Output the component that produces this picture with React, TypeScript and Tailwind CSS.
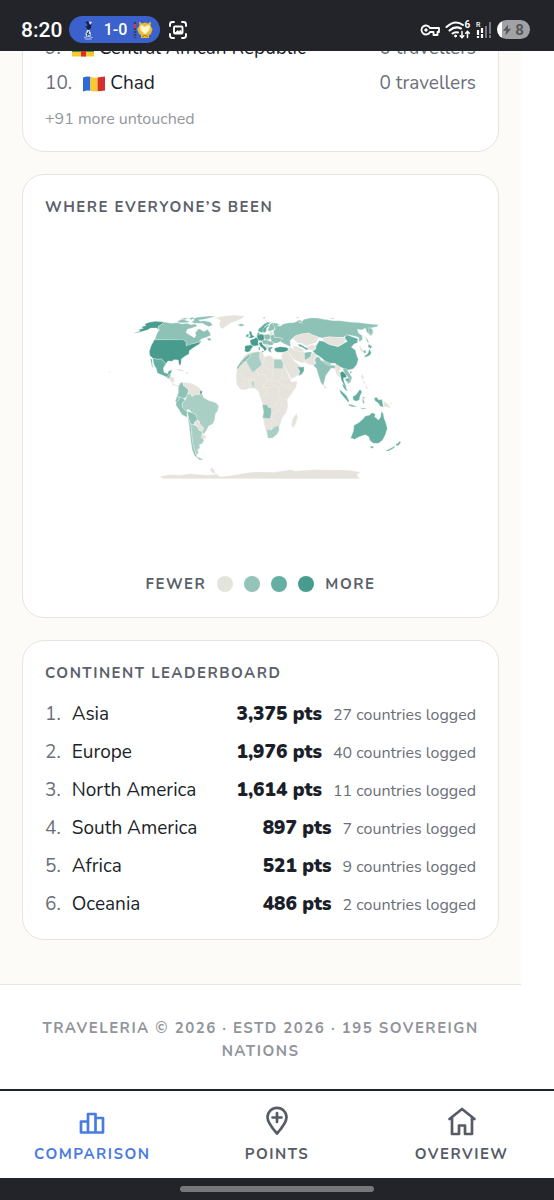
import React from "react";

const C = {
  none: "#e6e3dc",
  low: "#a9cfc4",
  mid: "#8fc2b7",
  high: "#64afa2",
  top: "#489c8e",
};

type Shape = [fill: string, d: string];

const WEST: Shape[] = [
  [C.top, "M100 100L112 96L120 93L116 89L130 85L124 80L138 77L134 72L148 67L166 64L193 66L184 74L174 80L177 90L170 84L152 84L142 90L128 94L112 98Z"],
  [C.mid, "M193 66L214 70L232 68L246 72L262 70L272 74L286 72L292 78L276 84L262 88L258 98L268 104L278 110L282 114L288 108L286 98L294 88L300 86L306 92L314 94L322 88L330 98L332 106L320 112L306 116L298 122L304 122L302 128L290 128L276 132L262 140L257 138L259 128L250 120L164 119L168 108L172 98L178 90L174 80L184 74Z"],
  [C.mid, "M232 64L246 58L262 62L270 66L254 68L238 68Z"],
  [C.mid, "M274 66L284 60L278 56L292 52L308 50L330 48L346 49L328 54L312 58L296 60L300 64L312 62L330 66L338 74L328 80L318 76L308 70L296 70L284 70Z"],
  [C.mid, "M240 58L252 54L264 54L256 59ZM266 56L276 52L284 54L274 59Z"],
  [C.mid, "M320 116L330 113L334 121L326 122Z"],
  [C.top, "M163 119L250 119L259 128L258 138L275 132L290 128L300 126L299 132L288 138L276 146L268 152L267 162L256 168L244 177L243 192L240 197L236 190L235 180L222 179L216 184L204 183L198 191L184 177L172 178L158 175L149 166L148 154L153 138Z"],
  [C.high, "M158 175L172 178L184 177L198 191L190 204L192 217L203 221L206 212L217 210L212 221L206 226L204 233L188 226L172 219L169 206L162 194Z"],
  [C.high, "M151 176L156 178L157 194L160 203L156 200Z"],
  [C.mid, "M204 226L213 222L211 232L206 236L200 234Z"],
  [C.none, "M211 230L222 232L223 246L216 248L208 238ZM216 248L226 254L238 257L244 260L230 259L217 254Z"],
  [C.none, "M227 207L242 208L254 214L244 214L232 210ZM257 217L267 217L265 221L257 221Z"],
  [C.none, "M348 53L372 48L402 46L434 48L424 56L408 64L392 69L374 82L368 87L360 80L358 70L362 62Z"],
  [C.mid, "M415 74L424 71L433 75L426 79L418 78Z"],
  [C.mid, "M240 250L248 246L250 256L258 262L266 270L264 282L258 292L250 296L238 291L231 289L235 278L235 262Z"],
  [C.none, "M250 247L262 248L274 250L290 258L302 268L306 282L284 285L276 290L270 280L262 284L266 270L258 262L250 256Z"],
  [C.top, "M301 270L307 275L304 284L300 280Z"],
  [C.mid, "M231 289L240 291L236 300L230 308L226 302Z"],
  [C.mid, "M228 308L236 300L240 291L250 296L256 300L246 310L248 322L260 330L262 342L260 352L246 344L236 328L228 316Z"],
  [C.low, "M262 284L270 280L276 290L284 285L306 282L312 294L328 302L348 308L356 318L353 332L346 342L344 360L338 372L326 378L320 390L312 402L302 394L310 384L300 374L298 364L290 360L288 344L276 338L266 328L256 332L248 322L246 310L256 300Z"],
  [C.mid, "M262 334L276 338L288 344L292 360L284 366L282 374L272 372L266 358Z"],
  [C.none, "M284 366L294 360L300 372L312 384L308 394L298 392L292 378L284 374Z"],
  [C.none, "M304 400L312 404L320 412L312 418L304 414Z"],
  [C.mid, "M262 342L268 364L272 372L275 392L276 412L280 436L286 456L292 474L284 468L277 450L273 426L270 396L266 366Z"],
  [C.low, "M272 372L282 374L292 380L298 392L308 395L304 412L312 420L308 430L298 434L300 444L292 450L296 458L290 464L293 474L286 456L280 436L276 412L275 392Z"],
  [C.mid, "M288 470L300 474L311 480L298 479Z"],
  [C.none, "M27 214L32 215L30 218Z"],
];

const EAST: Shape[] = [
  [C.mid, "M25 74L34 71L43 75L36 79L28 78Z"],
  [C.top, "M58 92L65 96L66 104L74 110L66 114L55 114L62 108L58 102Z"],
  [C.high, "M48 104L56 101L56 110L48 112Z"],
  [C.top, "M45 137L62 135L70 138L64 146L60 154L52 157L44 154Z"],
  [C.top, "M60 120L72 116L78 112L86 118L84 128L86 136L76 138L68 137L62 133Z"],
  [C.top, "M80 106L90 102L102 104L103 118L96 124L86 120L82 114Z"],
  [C.top, "M86 128L96 126L98 134L108 142L112 146L104 154L100 146L90 138ZM94 152L102 154L98 158ZM86 142L90 142L90 150L86 150Z"],
  [C.mid, "M102 104L116 102L122 108L120 118L110 120L103 116Z"],
  [C.mid, "M96 120L110 120L122 124L132 128L128 136L118 136L106 136L98 130Z"],
  [C.none, "M104 132L116 134L120 142L116 150L110 146Z"],
  [C.high, "M114 143L126 140L128 144L122 148L124 158L116 154Z"],
  [C.high, "M84 94L86 86L94 80L102 72L114 66L122 68L112 74L104 80L104 90L96 98L90 96Z"],
  [C.top, "M82 100L88 97L88 105L82 105Z"],
  [C.high, "M100 98L98 88L106 80L114 74L118 76L110 84L108 96Z"],
  [C.mid, "M112 92L116 84L120 72L128 68L134 78L134 88L122 93Z"],
  [C.none, "M116 96L126 94L130 104L122 106Z"],
  [C.mid, "M120 106L132 104L134 112L148 112L158 116L154 124L144 128L134 130L124 124Z"],
  [C.mid, "M128 68L140 70L150 74L140 78L152 78L160 72L178 68L190 68L206 62L210 70L216 64L222 58L240 54L262 54L282 58L310 62L330 62L360 66L390 68L420 72L446 74L440 80L422 84L430 96L424 108L410 96L406 84L396 90L382 88L386 100L396 106L398 118L388 126L386 112L372 108L352 104L340 112L316 112L296 110L276 114L262 110L246 104L236 100L216 102L196 108L188 114L180 122L182 140L172 136L160 130L150 124L158 116L148 112L134 112L132 104L130 94L136 86Z"],
  [C.mid, "M200 62L212 60L218 70L208 66ZM96 53L106 52L104 56ZM196 53L206 51L208 54ZM296 55L310 54L314 57Z"],
  [C.mid, "M404 108L412 118L418 128L412 126ZM416 82L428 88L426 104L416 98Z"],
  [C.top, "M134 144L150 140L168 142L176 146L172 154L158 157L142 157L134 152Z"],
  [C.none, "M188 116L198 106L218 101L236 99L250 106L266 112L262 120L256 128L242 132L230 138L214 130L202 128L196 122Z"],
  [C.high, "M204 132L214 134L226 142L238 146L230 150L216 142L206 138Z"],
  [C.none, "M188 138L202 140L222 150L220 156L206 154L192 150Z"],
  [C.none, "M232 140L248 134L262 138L256 146L248 152L236 148Z"],
  [C.none, "M180 140L192 150L206 154L222 156L224 176L226 188L214 188L200 182L188 176L180 162L172 154Z"],
  [C.mid, "M223 158L234 156L246 156L242 170L232 182L224 180Z"],
  [C.none, "M226 188L226 180L242 170L246 158L258 158L260 168L252 180L258 190L250 196L240 194Z"],
  [C.none, "M158 158L174 154L180 164L190 180L204 192L218 202L214 220L196 230L184 238L178 226L168 208L158 188L154 170Z"],
  [C.high, "M202 200L212 202L222 200L222 212L216 222L206 228L210 214Z"],
  [C.mid, "M250 196L258 190L254 180L260 170L268 172L274 182L290 190L304 196L316 196L318 206L304 204L298 212L288 226L284 240L280 258L272 246L264 222L260 206Z"],
  [C.low, "M274 180L290 184L304 192L300 197L286 192Z"],
  [C.none, "M283 256L289 260L287 267L283 264Z"],
  [C.high, "M248 154L258 146L258 138L268 122L280 124L300 134L324 140L342 130L352 124L344 114L350 104L366 110L384 116L382 128L372 132L364 142L376 150L380 166L385 178L380 194L370 206L356 210L344 208L334 202L322 200L316 190L300 190L284 182L272 172L260 164Z"],
  [C.none, "M276 116L296 111L318 112L342 114L348 120L340 130L324 139L300 134L284 126Z"],
  [C.none, "M314 196L322 194L334 204L328 214L334 228L328 232L318 220Z"],
  [C.top, "M330 218L338 214L348 222L350 232L340 234L342 246L350 262L344 258L334 240Z"],
  [C.mid, "M338 206L350 206L354 214L366 232L362 246L354 252L350 242L356 234L344 220Z"],
  [C.high, "M346 236L358 234L358 242L350 246Z"],
  [C.high, "M336 250L346 258L352 272L348 272L340 262ZM328 268L338 276L350 288L358 304L354 306L342 292L332 280Z"],
  [C.high, "M368 290L378 284L390 268L396 276L390 288L388 300L378 304L370 300Z"],
  [C.high, "M356 312L368 315L382 320L368 320L358 317Z"],
  [C.mid, "M398 292L408 290L400 296L404 308L400 312L397 302Z"],
  [C.mid, "M390 323L402 324L412 326L398 328Z"],
  [C.high, "M432 294L440 292L446 300L456 298L460 322L450 318L444 308L436 304Z"],
  [C.none, "M460 302L474 312L482 324L472 322L462 320ZM478 306L488 312L484 314ZM394 222L402 230L398 240L394 234ZM404 256L414 262L410 268ZM398 242L406 246L402 252Z"],
  [C.none, "M388 136L394 144L400 152L396 158L390 148Z"],
  [C.high, "M416 132L426 140L422 146L414 140ZM418 146L424 158L420 166L410 170L402 172L404 168L414 160ZM400 152L406 150L408 158L402 160Z"],
  [C.high, "M360 214L364 214L364 220L360 220Z"],
  [C.none, "M22 198L34 184L44 166L60 158L84 154L96 156L104 170L120 166L132 176L154 178L160 190L168 210L178 232L184 246L202 244L198 262L184 282L172 298L174 320L168 338L156 354L150 376L140 394L128 408L114 414L108 396L102 368L98 350L102 330L98 310L90 292L86 274L76 266L60 264L44 270L30 268L20 252L18 230Z"],
  [C.mid, "M40 176L50 168L62 160L60 172L46 184L30 198L24 208L20 204L30 188Z"],
  [C.low, "M62 160L78 156L90 156L88 170L92 184L96 194L80 208L68 218L50 188L48 182L60 172Z"],
  [C.low, "M132 178L154 178L160 190L158 206L132 206Z"],
  [C.mid, "M66 246L71 244L71 260L68 262Z"],
  [C.mid, "M97 314L112 314L114 322L124 324L124 340L120 356L98 354L101 336Z"],
  [C.low, "M110 388L124 390L134 380L146 376L148 388L142 402L128 414L114 415Z"],
  [C.none, "M200 340L203 352L196 374L188 384L184 374L188 356Z"],
  [C.high, "M362 414L370 394L372 376L386 368L398 358L406 348L418 346L426 338L436 342L434 350L446 360L452 350L454 334L460 342L462 354L468 370L472 386L466 404L458 420L446 430L430 430L420 422L416 410L406 404L388 410L374 418Z"],
  [C.high, "M422 438L432 440L428 445L422 444Z"],
  [C.high, "M498 432L504 430L508 424L513 427L506 436L498 437ZM466 453L482 445L496 437L492 444L476 453Z"],
];

const ANTARCTICA =
  "M180 529L210 524L240 526L270 521L300 524L330 526L350 522L338 518L330 510L336 502L342 510L346 520L360 530L400 526L432 520L460 516L490 516L520 517L548 513L570 509L586 513L610 511L650 509L690 510L720 510L750 511L780 517L770 526L779 536L190 536Z";

const AFRICA_BORDERS =
  "M50 188L34 188M60 264L56 240L40 236L34 222L20 224M56 240L72 238L86 226L80 208M104 170L100 190L96 194M132 206L128 214L100 200M86 226L104 222L112 238L98 262L86 268M128 214L126 236L112 242M158 206L156 232L146 246L126 240M146 246L170 262L184 262M98 262L124 262L132 256L148 262L146 282L150 296L172 300M90 292L106 286L112 264M124 324L134 322L138 306L150 300M124 340L140 338L154 322L154 306M120 356L134 362L140 378M124 390L124 362M160 320L170 322M44 270L44 250L30 246M30 268L30 256M178 232L168 240L156 232";

function WorldMap() {
  return (
    <svg viewBox="-165 -198 1293 972" className="mt-[17px] mb-4 block w-full" role="img" aria-label="World map">
      <g stroke="#f4f6f3" strokeWidth="1" strokeLinejoin="round">
        {WEST.map(([fill, d]) => (
          <path key={d} d={d} fill={fill} />
        ))}
        <path d={ANTARCTICA} fill={C.none} />
        <g transform="translate(390 0)">
          {EAST.map(([fill, d]) => (
            <path key={d} d={d} fill={fill} />
          ))}
          <path d={AFRICA_BORDERS} fill="none" />
        </g>
      </g>
    </svg>
  );
}

function ChadFlag() {
  return (
    <svg viewBox="0 0 22 18" className="h-[18px] w-[22px]" aria-hidden="true">
      <path d="M0 2.500Q4 .8 7.400 1.800V15.800Q4 15 0 16.500Z" fill="#2f6bd6" />
      <path d="M7.400 1.800Q11 3 14.600 2.500V16.300Q11 17 7.400 15.800Z" fill="#fbc92e" />
      <path d="M14.600 2.500Q18 2 22 1.500V15.500Q18 16 14.600 16.300Z" fill="#d6302c" />
    </svg>
  );
}

function CarFlag() {
  return (
    <svg viewBox="0 0 22 18" className="h-[18px] w-[22px]" aria-hidden="true">
      <path d="M0 2h22v4H0z" fill="#2f5fd0" />
      <path d="M0 6h22v3H0z" fill="#fff" />
      <path d="M0 9h22v3H0z" fill="#3f9b46" />
      <path d="M0 12h22v4.500H0z" fill="#fbc92e" />
      <path d="M9 2h5v14.500H9z" fill="#d6302c" />
    </svg>
  );
}

function StatusBar() {
  return (
    <header className="flex h-[51px] shrink-0 items-center justify-between bg-[#232429] pt-2 pr-6 pl-[21px] font-[Roboto,sans-serif] text-white">
      <div className="flex items-center">
        <span className="w-12 text-[21px] leading-6 font-medium">8:20</span>
        <span className="flex h-[27px] w-[91px] items-center justify-between rounded-full bg-[#3b62cc] pr-[7px] pl-[13px]">
          <svg viewBox="0 0 12 20" className="h-5 w-3" aria-hidden="true">
            <path d="M3 2.500L6 1L7 3.500L9.500 4L9 8L6.500 10L5 8.500L3 6L5.500 6.500L5 3.500Z" fill="#161e42" />
            <path d="M7 1.500L10 2L8 5Z" fill="#dce3f4" />
            <path d="M5 10h2.500l.5 2H4.500z" fill="#dce3f4" />
            <circle cx="6.200" cy="14" r="2.700" fill="#dce3f4" />
            <path d="M4.500 13l3.500 2M6.500 11.500l-1 5" stroke="#1c2850" strokeWidth="1" />
            <path d="M2 17.500Q6 15.500 10.500 17.500M3 19h6.500" stroke="#b9c8ef" fill="none" />
          </svg>
          <span className="ml-1 text-base leading-5 font-medium">1-0</span>
          <svg viewBox="0 0 20 20" className="h-5 w-5" aria-hidden="true">
            <path d="M2 2v16" stroke="#33406f" strokeWidth="2.500" strokeDasharray="2 1" />
            <path d="M2 4v4" stroke="#d33a48" strokeWidth="2.500" />
            <path d="M6 1.500L9 3.500L12 2.500L15 3.500L18 1.500L17.500 6L19.500 9L18 14L16 15V18H8V15L6 14L4 9L6.500 6Z" fill="#e8b933" />
            <path d="M7 6L9 5L12 7L15 5L17 6L16.500 10L12 14.500L7.500 10Z" fill="#fff5cf" stroke="#f7dc82" />
            <path d="M9 17l3-2 3 2" stroke="#9d7425" fill="none" />
          </svg>
        </span>
        <svg viewBox="0 0 20 20" className="ml-2 h-5 w-5" fill="none" stroke="#fff" strokeWidth="1.900" strokeLinecap="round" aria-hidden="true">
          <path d="M2 6V4.500Q2 2 4.500 2H6M14 2h1.500Q18 2 18 4.500V6M18 14v1.500Q18 18 15.500 18H14M6 18H4.500Q2 18 2 15.500V14" />
          <rect x="6" y="6.500" width="8.500" height="7" rx="1" />
          <path d="M7 13l2.500-2.500 1.500 1 1.500-1.500 1.500 3z" fill="#fff" strokeWidth=".6" />
        </svg>
      </div>
      <div className="flex items-center gap-[5px]">
        <svg viewBox="0 0 20 14" className="h-3.5 w-5" fill="none" stroke="#fff" strokeWidth="1.800" strokeLinejoin="round" aria-hidden="true">
          <path d="M10 5H19V9H17.500V12H13.500V9H10A4.500 4.500 0 1 1 10 5Z" />
          <circle cx="6" cy="7" r="1.300" fill="#fff" strokeWidth=".8" />
        </svg>
        <svg viewBox="0 0 26 20" className="h-5 w-[26px]" fill="none" stroke="#fff" strokeWidth="2" strokeLinecap="round" aria-hidden="true">
          <path d="M1.500 7Q10-1 18 5M4.500 10.500Q10 5.500 16 8.500M7.500 13.500Q10 11.500 13 12.500" />
          <circle cx="10.500" cy="16" r="1" fill="#fff" strokeWidth="1" />
          <path d="M17 11.500v6m-1.800-1.800l1.800 2 1.800-2M22.500 17.500v-6m-1.800 1.800l1.800-2 1.800 2" strokeWidth="1.500" />
          <text x="19.500" y="8" fill="#fff" stroke="none" fontSize="10" fontWeight="700">6</text>
        </svg>
        <svg viewBox="0 0 16 20" className="h-5 w-4" aria-hidden="true">
          <text x="0" y="7" fill="#fff" fontSize="7" fontWeight="500">R</text>
          <path d="M2 10v8M6 8v10" stroke="#fff" strokeWidth="2.200" strokeDasharray="5 1" />
          <path d="M10 6v12M14 2v16" stroke="#77787d" strokeWidth="2" strokeDasharray="12 1" />
        </svg>
        <span className="flex h-[19px] w-[33px] items-center justify-center gap-1 rounded-full bg-linear-to-r from-white from-15% to-[#a1a2a5] to-15% text-[#56575b]">
          <svg viewBox="0 0 10 14" className="h-3 w-2" aria-hidden="true">
            <path d="M6.500 0L0 8H4L3 14L10 5.500H6Z" fill="currentColor" />
          </svg>
          <span className="text-[15px] leading-4 font-bold">8</span>
        </span>
      </div>
    </header>
  );
}

function Card({ title, children }: { title?: string; children: React.ReactNode }) {
  return (
    <section className="rounded-[22px] border border-[#e6e4de] bg-white px-[22px] pt-[22px] pb-[21px]">
      {title && <h2 className="text-[15px] leading-5 font-bold tracking-[0.1em] text-[#5b606b] uppercase">{title}</h2>}
      {children}
    </section>
  );
}

const untouched = [
  { rank: 9, name: "Central African Republic", flag: <CarFlag /> },
  { rank: 10, name: "Chad", flag: <ChadFlag /> },
];

const continents = [
  { name: "Asia", points: "3,375", count: 27 },
  { name: "Europe", points: "1,976", count: 40 },
  { name: "North America", points: "1,614", count: 11 },
  { name: "South America", points: "897", count: 7 },
  { name: "Africa", points: "521", count: 9 },
  { name: "Oceania", points: "486", count: 2 },
];

const tabs = [
  {
    label: "Comparison",
    color: "text-[#4a7be0]",
    icon: <path d="M4 15.500h7v11H4zM11 8h7.500v18.500H11zM18.500 12H26v14.500h-7.500z" />,
  },
  {
    label: "Points",
    color: "text-[#565b66]",
    icon: <path d="M15 27.500C11 23 5.500 17 5.500 11.300a9.500 9.500 0 0 1 19 0C24.500 17 19 23 15 27.500ZM15 7v9M10.500 11.500h9" />,
  },
  {
    label: "Overview",
    color: "text-[#565b66]",
    icon: <path d="M2.500 13L15 3L27.500 13M5 11.500V28H12V19.500H18V28H25V11.500" />,
  },
];

export default function App() {
  return (
    <div className="flex h-screen flex-col overflow-hidden bg-white font-[Nunito,Lato,sans-serif] text-[#1b1f2a]">
      <StatusBar />
      <main className="flex min-h-0 flex-1 flex-col justify-end overflow-hidden">
        <div className="mr-[33px] shrink-0">
          <div className="flex flex-col gap-[22px] bg-[#fcfbf7] px-[22px] pb-11">
            <Card>
              <ol className="flex flex-col gap-2 text-[19px] leading-[27px]">
                {untouched.map((c) => (
                  <li key={c.rank} className="flex items-center">
                    <span className="mr-[11px] text-[#6b6f79]">{c.rank}.</span>
                    {c.flag}
                    <span className="ml-[5px]">{c.name}</span>
                    <span className="ml-auto text-[#6b6f79]">0 travellers</span>
                  </li>
                ))}
              </ol>
              <p className="mt-[11px] text-base leading-[22px] text-[#93969c]">+91 more untouched</p>
            </Card>
            <Card title="Where everyone’s been">
              <WorldMap />
              <div className="flex items-center justify-center gap-[11px] pb-0.5 text-[15px] leading-5 font-bold tracking-[0.1em] text-[#5b606b]">
                <span>FEWER</span>
                <span className="size-4 rounded-full bg-[#e4e4dd]" />
                <span className="size-4 rounded-full bg-[#94c3b9]" />
                <span className="size-4 rounded-full bg-[#64afa2]" />
                <span className="size-4 rounded-full bg-[#489c8e]" />
                <span>MORE</span>
              </div>
            </Card>
            <Card title="Continent leaderboard">
              <ol className="mt-[18px] flex flex-col gap-[11px] text-[19px] leading-[27px]">
                {continents.map((c, i) => (
                  <li key={c.name} className="flex items-baseline">
                    <span className="mr-[11px] text-[#6b6f79]">{i + 1}.</span>
                    <span>{c.name}</span>
                    <span className="ml-auto font-black">{c.points} pts</span>
                    <span className="ml-[11px] text-base leading-[22px] text-[#6b6f79]">{c.count} countries logged</span>
                  </li>
                ))}
              </ol>
            </Card>
          </div>
          <footer className="border-t border-[#e8e6e0] px-[22px] pt-8 pb-[26px] text-center text-[15px] leading-[23px] font-bold tracking-[0.1em] text-[#91949a]">
            TRAVELERIA © 2026 · ESTD 2026 · 195 SOVEREIGN NATIONS
          </footer>
        </div>
      </main>
      <nav className="grid shrink-0 grid-cols-3 border-t-2 border-[#20232e] bg-white pt-[15px] pb-3.5">
        {tabs.map((t) => (
          <button key={t.label} type="button" className={`flex flex-col items-center gap-2 ${t.color}`}>
            <svg viewBox="0 0 30 30" className="size-[30px]" fill="none" stroke="currentColor" strokeWidth="2.700" strokeLinecap="round" strokeLinejoin="round" aria-hidden="true">
              {t.icon}
            </svg>
            <span className="text-[15px] leading-5 font-bold tracking-[0.1em] uppercase">{t.label}</span>
          </button>
        ))}
      </nav>
      <div className="flex h-[22px] shrink-0 items-center justify-center bg-[#232429]">
        <span className="h-1.5 w-[194px] rounded-full bg-[#77787b]" />
      </div>
    </div>
  );
}
